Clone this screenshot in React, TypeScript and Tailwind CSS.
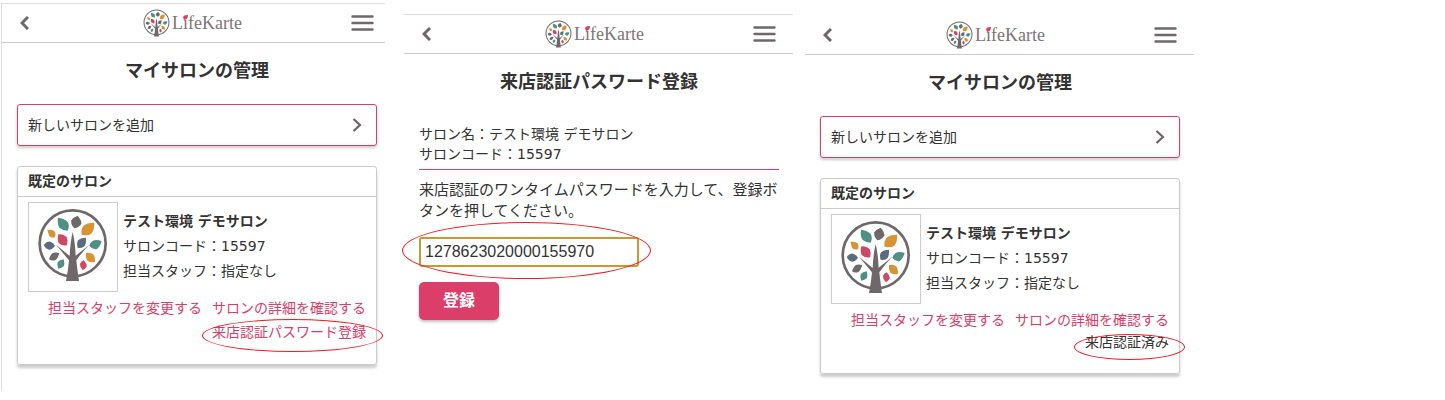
import type { ReactNode } from "react";
import { clsx } from "clsx";

const leaves = [
	{ color: "#4f8f86", d: "M113 69Q130 70 142 82Q149 95 142 108Q128 108 118 100Q110 88 113 69Z" },
	{ color: "#6f686a", d: "M172 63Q185 78 183 87Q178 97 162 101Q150 90 153 77Q158 68 172 63Z" },
	{ color: "#d79434", d: "M222 84Q222 108 212 118Q200 125 184 120Q181 105 189 94Q198 84 222 84Z" },
	{ color: "#d79434", d: "M81 106Q95 103 103 110Q108 118 104 128Q92 131 86 123Q84 115 81 106Z" },
	{ color: "#cb4964", d: "M114 119Q130 118 139 128Q144 140 140 152Q126 155 115 145Q110 135 114 119Z" },
	{ color: "#5c6b80", d: "M70 151Q80 139 90 141Q98 144 104 153Q96 165 86 165Q76 163 70 151Z" },
	{ color: "#5c6b80", d: "M197 129Q198 145 193 154Q185 162 172 159Q168 148 172 138Q180 129 197 129Z" },
	{ color: "#4f8f86", d: "M244 139Q240 155 230 163Q218 167 207 153Q212 140 222 137Q232 135 244 139Z" },
	{ color: "#6f686a", d: "M117 175Q113 190 106 196Q95 200 86 194Q90 180 97 175Q106 172 117 175Z" },
	{ color: "#4f8f86", d: "M130 194Q134 208 130 215Q124 221 114 222Q109 212 112 203Q118 196 130 194Z" },
	{ color: "#d79434", d: "M197 175Q212 172 220 180Q225 190 224 202Q210 204 201 198Q195 188 197 175Z" },
	{ color: "#cb4964", d: "M190 197Q200 207 199 216Q195 223 187 226Q178 217 179 207Q183 199 190 197Z" },
];

function TreeMark({ className, viewBox = "52 40 210 222" }: { className: string; viewBox?: string }) {
	return (
		<svg viewBox={viewBox} className={className} aria-hidden="true">
			<circle cx="157" cy="146" r="99" fill="none" stroke="#6f686a" strokeWidth="8" />
			<path
				d="M157 112Q164 140 166 183L207 150Q185 172 168 197Q172 235 176 259H137Q143 230 146 197Q128 175 107 150L148 184Q150 140 157 112Z"
				fill="#6f686a"
			/>
			{leaves.map((leaf) => (
				<path key={leaf.d} d={leaf.d} fill={leaf.color} />
			))}
		</svg>
	);
}

function Logo() {
	return (
		<a href="#home" className="flex w-[100px] items-center gap-0.5">
			<TreeMark className="h-7 w-[27px] shrink-0" />
			<span className="relative font-['Liberation_Serif',serif] text-lg leading-7 text-[#7d7577]">
				LifeKarte
				<svg viewBox="0 0 6 6" className="absolute top-1.5 left-[11px] size-[5px]" aria-hidden="true">
					<path d="M6 0Q6 5 2 6Q-1 4 1 1Q3 0 6 0Z" fill="#d8405f" />
				</svg>
			</span>
		</a>
	);
}

// hand-drawn red ring around the part being explained
function Ring({ className }: { className: string }) {
	return <span aria-hidden="true" className={clsx("pointer-events-none absolute rounded-[50%] border border-[#ed1c24]", className)} />;
}

function Screen({
	title,
	className,
	headerClassName,
	mainClassName,
	children,
}: {
	title: string;
	className: string;
	headerClassName: string;
	mainClassName: string;
	children: ReactNode;
}) {
	return (
		<section className={clsx("min-w-0 flex-1", className)}>
			<header className={clsx("flex h-10 items-center justify-between border-y border-b-[#ccc]", headerClassName)}>
				<button type="button" aria-label="戻る" className="w-[15px]">
					<svg viewBox="0 0 9 14" className="h-3.5 w-[9px]" fill="none" stroke="#6f686a" strokeWidth="3">
						<path d="M8 1L2 7L8 13" />
					</svg>
				</button>
				<Logo />
				<button type="button" aria-label="メニュー" className="w-[23px]">
					<svg viewBox="0 0 23 16" className="h-4 w-[23px]" stroke="#6f686a" strokeWidth="2.4" strokeLinecap="round">
						<path d="M1.5 1.5H21.5M1.5 8H21.5M1.5 14.5H21.5" />
					</svg>
				</button>
			</header>
			<main className={mainClassName}>
				<h1 className="mb-5 pt-3.5 text-center text-lg leading-[27px] font-bold">{title}</h1>
				{children}
			</main>
		</section>
	);
}

function SalonList({ children }: { children: ReactNode }) {
	return (
		<>
			<a
				href="#add"
				className="flex h-[42px] items-center justify-between rounded-[3px] border border-[#da3e69] pr-3.5 pl-2.5 shadow-[0_2px_3px_rgba(0,0,0,0.2)]"
			>
				新しいサロンを追加
				<svg viewBox="0 0 10 14" className="h-3.5 w-2.5" fill="none" stroke="#6b6567" strokeWidth="2.2" aria-hidden="true">
					<path d="M1.5 1L8 7L1.5 13" />
				</svg>
			</a>
			<div className="mt-5 rounded-[3px] border border-[#ccc] pb-5 shadow-[0_3px_3px_rgba(0,0,0,0.2)]">
				<h2 className="border-b border-[#ccc] px-2.5 pt-1 pb-1 leading-[21px] font-bold">既定のサロン</h2>
				<div className="flex gap-[5px] px-2.5 pt-[5px]">
					<div className="flex size-[90px] shrink-0 items-center justify-center border border-[#ccc]">
						<TreeMark className="size-[78px]" viewBox="41 40 234 234" />
					</div>
					<div className="pt-[7px] leading-[25px]">
						<p className="font-bold">テスト環境 デモサロン</p>
						<p>サロンコード：15597</p>
						<p>担当スタッフ：指定なし</p>
					</div>
				</div>
				<div className="flex flex-col items-end px-2.5 pt-1">
					<div className="flex flex-wrap justify-end gap-x-2.5 leading-6 text-[#da3e69]">
						<a href="#staff">担当スタッフを変更する</a>
						<a href="#detail">サロンの詳細を確認する</a>
					</div>
					{children}
				</div>
			</div>
		</>
	);
}

export default function App() {
	return (
		<div className="flex items-start bg-white pl-px font-['DejaVu_Sans','Noto_Sans_CJK_JP',sans-serif] text-sm text-[#333]">
			<Screen
				title="マイサロンの管理"
				className="mt-[3px] max-w-96 border-l border-[#ddd]"
				headerClassName="border-t-[#ddd] pr-[11px] pl-[18px]"
				mainClassName="pr-2 pb-[26px] pl-[15px]"
			>
				<SalonList>
					<div className="relative leading-6">
						<a href="#password" className="text-[#da3e69]">
							来店認証パスワード登録
						</a>
						<Ring className="-top-px -right-[17px] -bottom-2 -left-2.5" />
					</div>
				</SalonList>
			</Screen>

			<Screen
				title="来店認証パスワード登録"
				className="mt-3.5 ml-[19px] max-w-[389px]"
				headerClassName="border-t-[#ddd] pr-[17px] pl-[18px]"
				mainClassName="pr-3.5 pl-[15px]"
			>
				<div className="mt-[29px] border-b border-[#da3e69] pb-[5px] leading-5">
					<p>サロン名：テスト環境 デモサロン</p>
					<p>サロンコード：15597</p>
				</div>
				<form onSubmit={(e) => e.preventDefault()}>
					<label htmlFor="otp" className="mt-2.5 block text-[15px] leading-[21px]">
						来店認証のワンタイムパスワードを入力して、登録ボタンを押してください。
					</label>
					<div className="relative mt-[15px] w-[220px]">
						<input
							id="otp"
							type="text"
							defaultValue="1278623020000155970"
							className="block h-[30px] w-full rounded-[3px] border-2 border-[#c9982f] bg-white px-1 font-['Liberation_Sans',sans-serif] text-base outline-none"
						/>
						<Ring className="-top-[15px] -right-3 -bottom-3 -left-[17px]" />
					</div>
					<button
						type="submit"
						className="mt-[15px] h-[38px] w-20 rounded-[5px] bg-[#da3e69] text-base font-bold text-white shadow-[0_2px_3px_rgba(0,0,0,0.25)]"
					>
						登録
					</button>
				</form>
			</Screen>

			<Screen
				title="マイサロンの管理"
				className="mt-[15px] ml-3 max-w-[389px]"
				headerClassName="border-t-transparent pr-[17px] pl-[18px]"
				mainClassName="pr-3.5 pl-[15px]"
			>
				<SalonList>
					<div className="relative leading-[21px]">
						来店認証済み
						<Ring className="top-0.5 -right-4 -bottom-[7px] -left-[11px]" />
					</div>
				</SalonList>
			</Screen>
		</div>
	);
}
